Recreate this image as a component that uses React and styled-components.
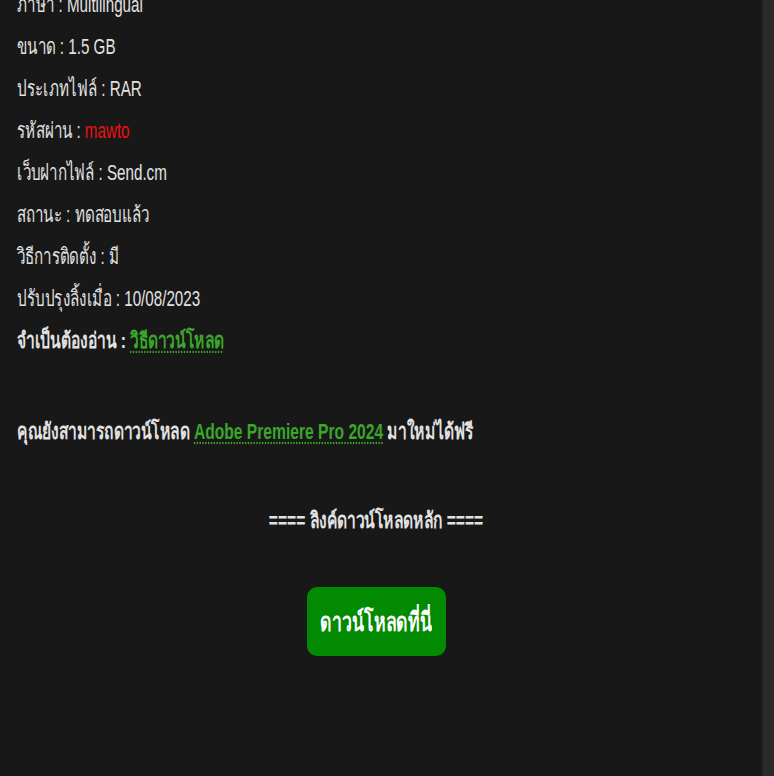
import React from "react";
import styled, { createGlobalStyle } from "styled-components";

const Global = createGlobalStyle`
  html, body { margin: 0; padding: 0; background: #181818; }
  body { overflow: hidden; }
`;

const Page = styled.div`
  display: flex;
  width: 774px;
  height: 776px;
  overflow: hidden;
  background: #181818;
`;

const Content = styled.main`
  flex: 1;
  padding: 0 27px 0 17px;
  margin-top: -16px;
  font-family: "Liberation Sans", Arial, sans-serif;
  font-size: 22px;
  color: #e2e2e2;
`;

const Rail = styled.div`
  width: 11px;
  background: #2a2a2a;
  border-left: 1px solid #222;
`;

const Narrow = styled.span`
  display: inline-block;
  white-space: nowrap;
  transform: scaleX(${(p) => p.$ratio || 0.69});
  transform-origin: ${(p) => (p.$center ? "center" : "left")} center;
`;

const InfoLine = styled.div`
  line-height: 42px;
  font-weight: ${(p) => (p.$bold ? 700 : 400)};
  white-space: nowrap;
`;

const Red = styled.span`
  color: #ee1111;
`;

const GreenLink = styled.a`
  color: #3aa62a;
  text-decoration: underline dotted;
  text-underline-offset: 3px;
`;

const Promo = styled.p`
  margin: 49px 0 0;
  line-height: 42px;
  font-weight: 700;
`;

const Heading = styled.p`
  margin: 47px 0 0;
  line-height: 42px;
  font-weight: 700;
  text-align: center;
`;

const ButtonRow = styled.div`
  display: flex;
  justify-content: center;
  margin-top: 45px;
`;

const DownloadButton = styled.a`
  display: flex;
  align-items: center;
  justify-content: center;
  width: 139px;
  height: 69px;
  border-radius: 10px;
  background: #038a03;
  color: #ffffff;
  font-weight: 700;
  font-size: 26px;
  text-decoration: none;
`;

const rows = [
  ["ภาษา", "Multilingual"],
  ["ขนาด", "1.5 GB"],
  ["ประเภทไฟล์", "RAR"],
  ["รหัสผ่าน", <Red key="p">mawto</Red>],
  ["เว็บฝากไฟล์", "Send.cm"],
  ["สถานะ", "ทดสอบแล้ว"],
  ["วิธีการติดตั้ง", "มี"],
  ["ปรับปรุงลิ้งเมื่อ", "10/08/2023"],
];

export default function App() {
  return (
    <Page>
      <Global />
      <Content>
        {rows.map(([k, v]) => (
          <InfoLine key={k}>
            <Narrow>
              {k} : {v}
            </Narrow>
          </InfoLine>
        ))}
        <InfoLine $bold>
          <Narrow $ratio={0.71}>
            จำเป็นต้องอ่าน : <GreenLink href="#">วิธีดาวน์โหลด</GreenLink>
          </Narrow>
        </InfoLine>
        <Promo>
          <Narrow $ratio={0.71}>
            คุณยังสามารถดาวน์โหลด <GreenLink href="#">Adobe Premiere Pro 2024</GreenLink> มาใหม่ได้ฟรี
          </Narrow>
        </Promo>
        <Heading>
          <Narrow $ratio={0.71} $center>
            ==== ลิงค์ดาวน์โหลดหลัก ====
          </Narrow>
        </Heading>
        <ButtonRow>
          <DownloadButton href="#">
            <Narrow $ratio={0.68} $center>
              ดาวน์โหลดที่นี่
            </Narrow>
          </DownloadButton>
        </ButtonRow>
      </Content>
      <Rail />
    </Page>
  );
}
